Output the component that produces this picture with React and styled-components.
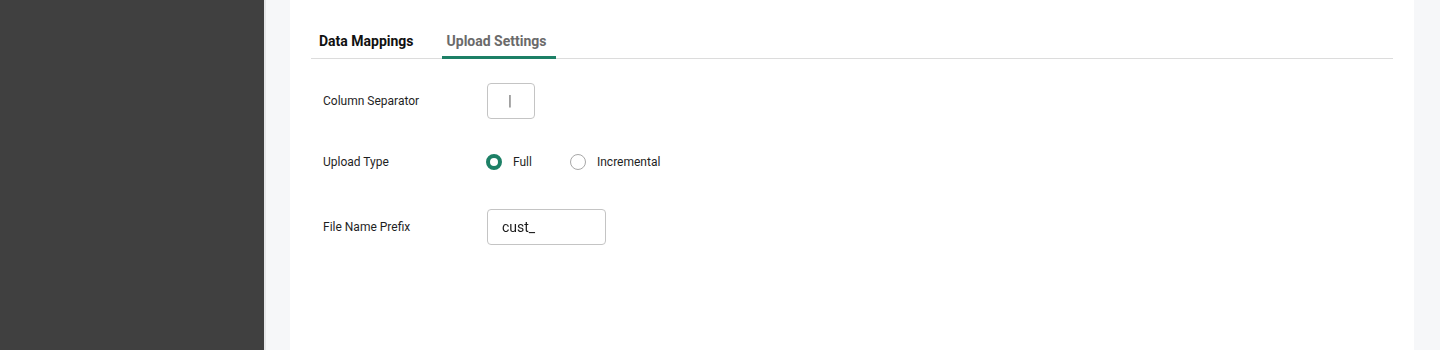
import React from "react";
import styled, { createGlobalStyle } from "styled-components";

const Global = createGlobalStyle`
  html, body { margin: 0; padding: 0; }
  body { font-family: Roboto, "Liberation Sans", sans-serif; background: #f6f7f9; }
`;

const Shell = styled.div`
  display: flex;
  height: 350px;
  overflow: hidden;
`;

const Sidebar = styled.aside`
  width: 264px;
  flex: none;
  background: #404040;
`;

const Main = styled.main`
  flex: 1;
  display: flex;
  background: #f6f7f9;
  border-left: 2px solid #e6e7e9;
  padding: 0 26px 0 24px;
`;

const Card = styled.section`
  flex: 1;
  background: #ffffff;
  padding: 0 21px;
`;

const TabBar = styled.div`
  display: flex;
  align-items: flex-end;
  height: 58px;
  border-bottom: 1px solid #dcdcdc;
  gap: 20px;
`;

const Tab = styled.button`
  all: unset;
  box-sizing: border-box;
  height: 33px;
  padding: ${(p) => (p.$active ? "0 9px 0 5px" : "0 8px")};
  font-family: Roboto, "Liberation Sans", sans-serif;
  font-size: 14px;
  font-weight: 700;
  line-height: 16px;
  color: ${(p) => (p.$active ? "#6a6a6a" : "#111111")};
  border-bottom: 3px solid ${(p) => (p.$active ? "#1d8066" : "transparent")};
  margin-bottom: -1px;
`;

const Form = styled.div`
  display: flex;
  flex-direction: column;
  padding: 24px 0 0 12px;
`;

const Row = styled.div`
  display: grid;
  grid-template-columns: 164px auto;
  align-items: center;
  height: 36px;
  margin-top: ${(p) => p.$mt || 0}px;
`;

const Label = styled.label`
  font-size: 12px;
  color: #1f1f1f;
`;

const Input = styled.input`
  box-sizing: border-box;
  width: ${(p) => p.$w}px;
  height: 36px;
  border: 1px solid #c4c4c4;
  border-radius: 4px;
  padding: ${(p) => p.$pad || "0 14px"};
  font-family: Roboto, "Liberation Sans", sans-serif;
  font-size: 14px;
  color: ${(p) => p.$color || "#1a1a1a"};
  text-align: ${(p) => p.$align || "left"};
  outline: none;
  background: #fff;
  will-change: transform;
`;

const RadioGroup = styled.div`
  display: flex;
  align-items: center;
  gap: 38px;
  margin-left: -1px;
`;

const RadioOption = styled.label`
  display: flex;
  align-items: center;
  gap: 11px;
  font-size: 12px;
  color: #1f1f1f;
`;

const RadioDot = styled.span`
  box-sizing: border-box;
  width: 16px;
  height: 16px;
  border-radius: 50%;
  border: ${(p) => (p.$checked ? "4px solid #1d8066" : "1.5px solid #a8a8a8")};
  background: #fff;
`;

export default function App() {
  return (
    <>
      <Global />
      <Shell>
        <Sidebar />
        <Main>
          <Card>
            <TabBar>
              <Tab>Data Mappings</Tab>
              <Tab $active>Upload Settings</Tab>
            </TabBar>
            <Form>
              <Row>
                <Label>Column Separator</Label>
                <Input
                  $w={48}
                  $align="center"
                  $pad="0 15px 0 13px"
                  $color="#555555"
                  defaultValue="|"
                />
              </Row>
              <Row $mt={25}>
                <Label>Upload Type</Label>
                <RadioGroup>
                  <RadioOption>
                    <RadioDot $checked />
                    Full
                  </RadioOption>
                  <RadioOption>
                    <RadioDot />
                    Incremental
                  </RadioOption>
                </RadioGroup>
              </Row>
              <Row $mt={29}>
                <Label>File Name Prefix</Label>
                <Input $w={119} defaultValue="cust_" />
              </Row>
            </Form>
          </Card>
        </Main>
      </Shell>
    </>
  );
}
